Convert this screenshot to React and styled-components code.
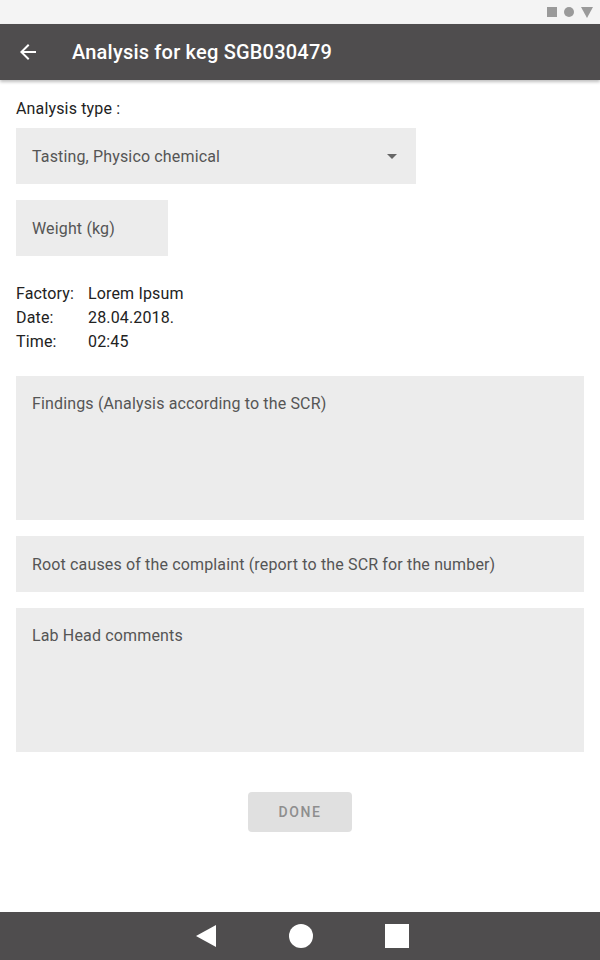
import React from 'react';
import styled, { createGlobalStyle } from 'styled-components';

const GlobalStyle = createGlobalStyle`
  html, body { margin: 0; padding: 0; }
  body { font-family: Roboto, "Noto Sans", sans-serif; background: #fff; }
`;

const Screen = styled.div`
  width: 600px;
  height: 960px;
  display: flex;
  flex-direction: column;
  background: #fff;
`;

const StatusBar = styled.div`
  height: 24px;
  background: #f4f4f4;
  display: flex;
  align-items: center;
  justify-content: flex-end;
  gap: 7px;
  padding-right: 7px;
`;

const AppBar = styled.div`
  height: 56px;
  background: #4f4d4e;
  display: flex;
  align-items: center;
  box-shadow: 0 2px 3px rgba(0, 0, 0, 0.25);
  position: relative;
  z-index: 1;
`;

const BackButton = styled.div`
  width: 72px;
  display: flex;
  align-items: center;
  padding-left: 16px;
  box-sizing: border-box;
`;

const Title = styled.div`
  color: #fff;
  font-size: 20px;
  font-weight: 500;
  letter-spacing: 0.2px;
`;

const Content = styled.div`
  flex: 1;
  padding: 20px 16px 0;
  display: flex;
  flex-direction: column;
  letter-spacing: 0.15px;
`;

const Label = styled.div`
  font-size: 16px;
  color: #222;
  line-height: 18px;
  margin-bottom: 10px;
`;

const Field = styled.div`
  background: #ececec;
  width: ${p => p.width || '100%'};
  height: ${p => p.height || 56}px;
  box-sizing: border-box;
  padding: 0 16px;
  display: flex;
  align-items: ${p => (p.multiline ? 'flex-start' : 'center')};
  padding-top: ${p => (p.multiline ? '18px' : '0')};
  justify-content: space-between;
  color: #555;
  font-size: 16px;
  margin-bottom: 16px;
`;

const Caret = styled.div`
  width: 0;
  height: 0;
  border-left: 5px solid transparent;
  border-right: 5px solid transparent;
  border-top: 5px solid #666;
  margin-right: 3px;
`;

const InfoTable = styled.div`
  display: grid;
  grid-template-columns: 72px auto;
  font-size: 16px;
  line-height: 24px;
  color: #222;
  margin-top: 10px;
  margin-bottom: 22px;
`;

const ButtonRow = styled.div`
  display: flex;
  justify-content: center;
  margin-top: 24px;
`;

const DoneButton = styled.button`
  width: 104px;
  height: 40px;
  border: none;
  border-radius: 4px;
  background: #e0e0e0;
  color: #8e8e8e;
  font-family: Roboto, sans-serif;
  font-weight: 500;
  font-size: 14px;
  letter-spacing: 1.6px;
`;

const NavBar = styled.div`
  height: 48px;
  background: #4f4d4e;
  display: flex;
  align-items: center;
  justify-content: center;
  padding-left: 4px;
  gap: 72px;
`;

const StatusSquare = styled.div`
  width: 10px;
  height: 10px;
  background: #9a9a9a;
`;

const StatusDot = styled.div`
  width: 10px;
  height: 10px;
  border-radius: 50%;
  background: #9a9a9a;
`;

export default function App() {
  return (
    <Screen>
      <GlobalStyle />
      <StatusBar>
        <StatusSquare />
        <StatusDot />
        <svg width="12" height="11" viewBox="0 0 12 11">
          <path d="M0 0 H12 L6 11 Z" fill="#9a9a9a" />
        </svg>
      </StatusBar>
      <AppBar>
        <BackButton>
          <svg width="24" height="24" viewBox="0 0 24 24">
            <path d="M20 11H7.83l5.59-5.59L12 4l-8 8 8 8 1.41-1.41L7.83 13H20v-2z" fill="#fff" />
          </svg>
        </BackButton>
        <Title>Analysis for keg SGB030479</Title>
      </AppBar>
      <Content>
        <Label>Analysis type :</Label>
        <Field width="400px">
          Tasting, Physico chemical
          <Caret />
        </Field>
        <Field width="152px">Weight (kg)</Field>
        <InfoTable>
          <span>Factory:</span><span>Lorem Ipsum</span>
          <span>Date:</span><span>28.04.2018.</span>
          <span>Time:</span><span>02:45</span>
        </InfoTable>
        <Field height={144} multiline>Findings (Analysis according to the SCR)</Field>
        <Field>Root causes of the complaint (report to the SCR for the number)</Field>
        <Field height={144} multiline>Lab Head comments</Field>
        <ButtonRow>
          <DoneButton>DONE</DoneButton>
        </ButtonRow>
      </Content>
      <NavBar>
        <svg width="22" height="24" viewBox="0 0 22 24">
          <path d="M21 1 V23 L1 12 Z" fill="#fff" />
        </svg>
        <svg width="24" height="24" viewBox="0 0 24 24">
          <circle cx="12" cy="12" r="12" fill="#fff" />
        </svg>
        <svg width="24" height="24" viewBox="0 0 24 24">
          <rect x="0" y="0" width="24" height="24" fill="#fff" />
        </svg>
      </NavBar>
    </Screen>
  );
}
